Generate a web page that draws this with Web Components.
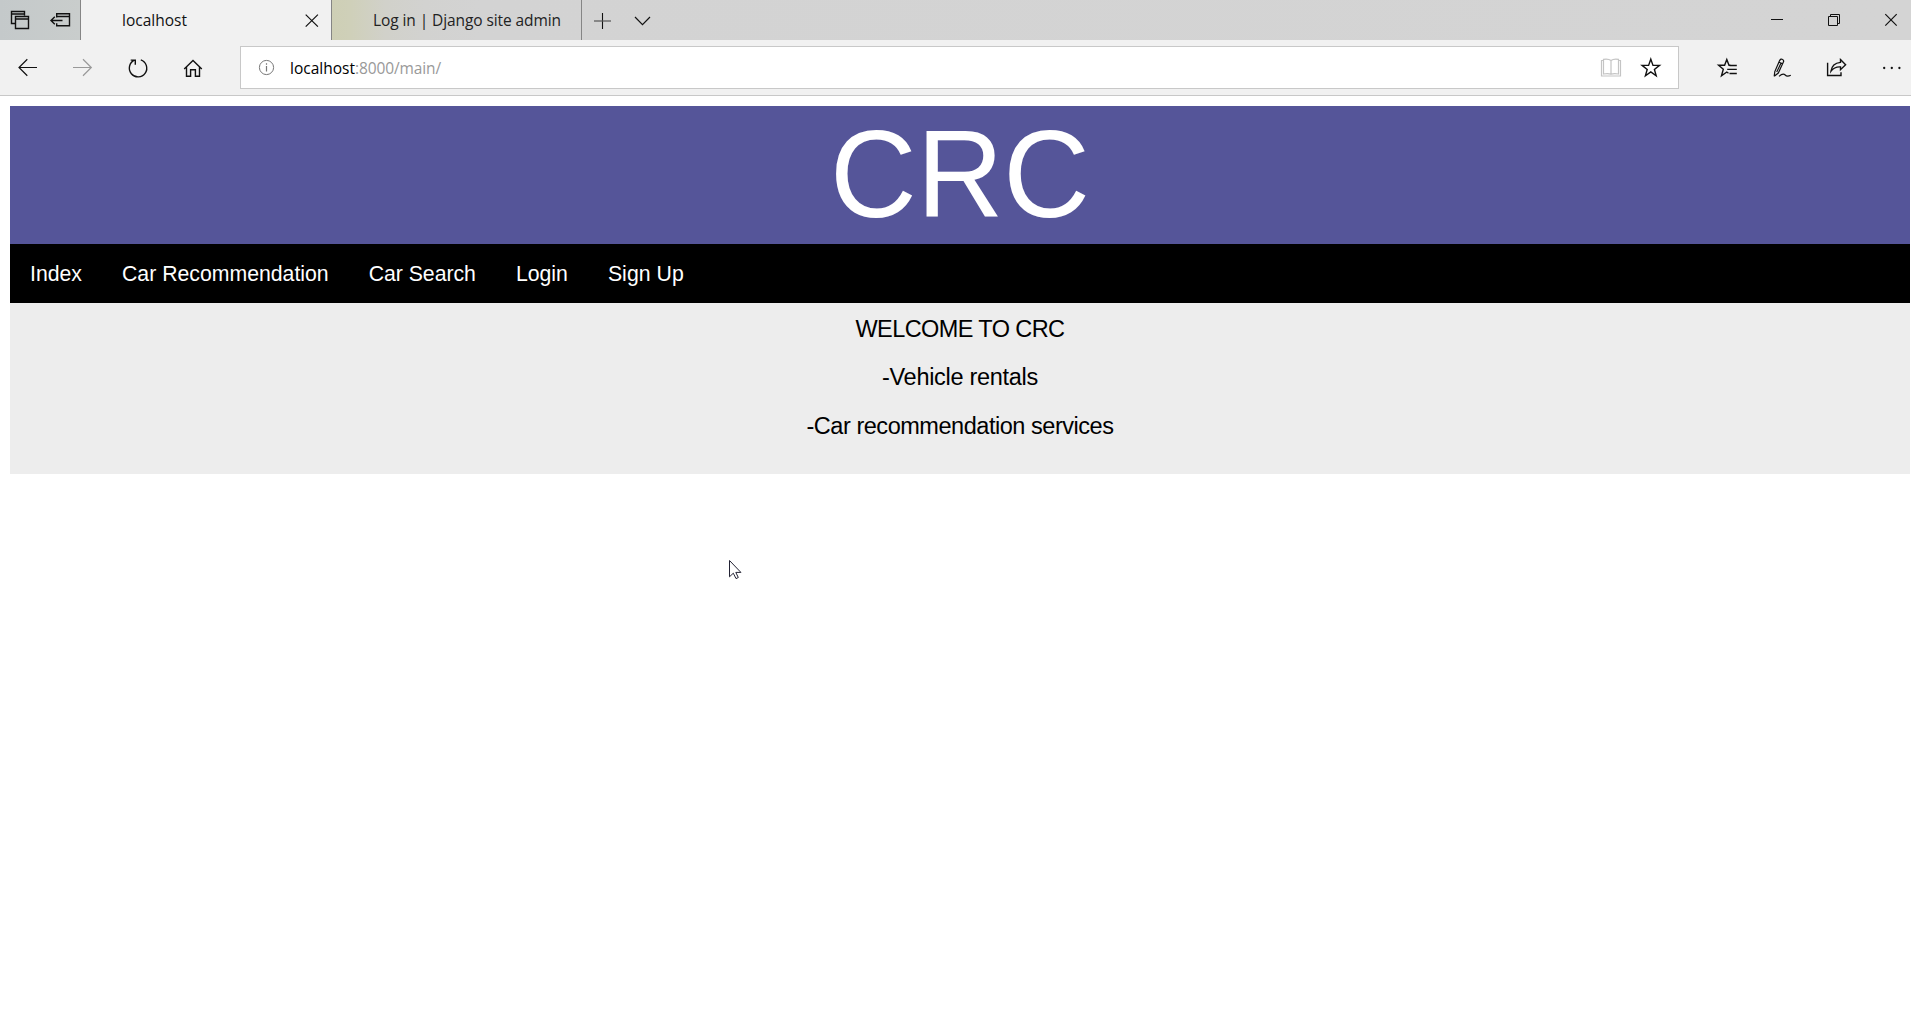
<!DOCTYPE html>
<html lang="en">
<head>
<meta charset="utf-8">
<title>localhost</title>
<style>
html,body{margin:0;height:100%;background:#fff;overflow:hidden}
body{font-family:"Open Sans","Noto Sans",sans-serif}
</style>
</head>
<body>
<browser-window></browser-window>
<script>
// Each icon: view box [x, y, w, h] and its drawing, in window units.
const ICONS = {
  tabs: [0,0,40,40,'<path d="M15 23.5H11.5V11.5H24.5V15.5M11.5 14H24.5M15.5 16.5H28.5V28.5H15.5ZM15.5 19H28.5" stroke-width="1.4"/>'],
  aside: [40,0,40,40,'<path d="M56.7 17.5V13.7H69.5V25.8H56.7V23.2M56.7 16.5H69.5M51 20.5H62.5M54.8 16.8L51 20.5L54.8 24.2" stroke-width="1.4"/>'],
  close: [292,0,40,40,'<path d="M305.7 14.6L317.9 26.6M317.9 14.6L305.7 26.6" stroke-width="1.2"/>'],
  plus: [582,0,40,40,'<path d="M602.5 13V29" stroke-width="1.1"/><path d="M594 21H611" stroke-width="1.2" stroke="#555"/>'],
  down: [622,0,40,40,'<path d="M635 17L642.5 24.6L650 17" stroke-width="1.2"/>'],
  min: [1748,0,58,40,'<path d="M1771 19.5H1783"/>'],
  max: [1806,0,56,40,'<path d="M1828.5 16.5H1837.5V25.5H1828.5ZM1830.5 16.5V14.5H1839.5V23.5H1837.5"/>'],
  quit: [1862,0,49,40,'<path d="M1885.3 14.2L1896.7 25.6M1896.7 14.2L1885.3 25.6" stroke-width="1.2"/>'],
  back: [0,41,55,54,'<path d="M19 67.5H37M27.3 59.3L19 67.5L27.3 75.7" stroke-width="1.2"/>'],
  forward: [55,41,55,54,'<path d="M73 67.5H91.3M83 59.3L91.3 67.5L83 75.7" stroke="#999" stroke-width="1.2"/>'],
  refresh: [110,41,55,54,'<path d="M140.8 59.9A8.7 8.7 0 1 1 134.5 60.2M130.7 60.1H135.3V64.7" stroke-width="1.4"/>'],
  home: [165,41,55,54,'<path d="M184.2 69L193 60.5L201.8 69M186.5 67V76.3H190.6V69.7H195.4V76.3H199.5V67" stroke-width="1.4"/>'],
  info: [251,47,31,41,'<g stroke="#777"><circle cx="266.5" cy="67.5" r="7.1"/><path d="M266.5 66V71.5M266.5 63.2V64.8" stroke-width="1.2"/></g>'],
  book: [1591,47,40,41,'<path d="M1611 60.5Q1608.5 58.5 1603.5 59.3V74Q1608.5 73.3 1611 74.3Q1613.5 73.3 1618.5 74V59.3Q1613.5 58.5 1611 60.5V74M1603.5 60.5H1601.5V76H1620.5V60.5H1618.5" stroke="#c4c4c4" stroke-width="1.2"/>'],
  star: [1631,47,40,41,'<path d="M1650.8 59.2L1653 65.4H1659.5L1654.4 69.4L1656.2 75.8L1650.8 71.9L1645.4 75.8L1647.2 69.4L1642.1 65.4H1648.6Z" stroke-width="1.4"/>'],
  hub: [1700,41,55,54,'<path d="M1730.5 65.3H1729L1726.8 59.4L1724.6 65.3H1718.6L1723.3 69.3L1721.5 75.8L1726.8 72L1728.5 73.2M1729.5 65.5H1736.8M1727.2 69.4H1736.8M1729.5 73.5H1736.8" stroke-width="1.4"/>'],
  pen: [1755,41,54,54,'<path d="M1774.2 76.3L1774.8 71.6L1779.6 60.6Q1781 58.3 1782.6 59.4Q1784.2 60.4 1783.4 62L1778.3 73L1774.2 76.3M1779 62.2L1782.7 63.8M1776.7 72L1781.2 62.8M1779 76.4Q1783 72.8 1785.2 75Q1787 77 1790.8 75.2" stroke-width="1.2"/>'],
  share: [1809,41,55,54,'<path d="M1827.6 62.8V75.5H1841V72.2M1840.5 59.6L1845.6 64.7L1840.5 69.7V66.9Q1834.5 66.5 1831 71.2Q1832 63.3 1840.5 62.4Z" stroke-width="1.4"/>'],
  more: [1864,41,47,54,'<g fill="#111" stroke="none"><circle cx="1884.2" cy="68" r="1.15"/><circle cx="1891.8" cy="68" r="1.15"/><circle cx="1899.4" cy="68" r="1.15"/></g>'],
  cursor: [726,556,18,26,'<path d="M729.5 560.5V576.8L733.3 573.2L736 578.6L738.3 577.5L735.8 572.4H740.9Z" fill="#fff" stroke="#223" stroke-width="1"/>']
};
function define(name, html, setup) {
  customElements.define(name, class extends HTMLElement {
    connectedCallback() {
      if (this.shadowRoot) return;
      const root = this.attachShadow({mode: 'open'});
      root.innerHTML = html;
      if (setup) setup(this, root);
    }
  });
}
define('line-icon', '<style>:host{display:block;flex:none}svg{display:block}</style>', (host, root) => {
  const [x, y, w, h, art] = ICONS[host.getAttribute('name')];
  root.innerHTML += `<svg width="${w}" height="${h}" viewBox="${x} ${y} ${w} ${h}" fill="none" stroke="#111" stroke-width="1">${art}</svg>`;
});
// Tracks its text so that it fills the given width.
define('fit-text', '<style>:host{display:inline-block;white-space:pre;flex:none}</style><slot></slot>', (host) => {
  const want = +host.getAttribute('width');
  const n = host.textContent.length;
  host.style.letterSpacing = ((want - host.getBoundingClientRect().width) / n) + 'px';
});
define('browser-tab', `<style>
:host{display:flex;align-items:center;box-sizing:border-box;height:40px;border-right:1px solid #858585;font-size:15.5px;line-height:20px;color:#222}
:host([active]){background:#f1f1f1;color:#111}
</style><slot></slot>`);
define('tab-strip', `<style>
:host{display:flex;height:40px;background:linear-gradient(90deg,#c4c9ca 0,#c9cdcc 80px,#c9cdcc 330px,#cecfb5 332px,#cfd0b9 350px,#d1d1ca 385px,#d2d2d0 425px,#d3d3d3 480px,#d4d4d4 100%)}
.set{display:flex;width:80px;border-right:1px solid #858585}
.one{width:251px}.two{width:250px}
.one fit-text{margin-left:41px}.two fit-text{margin-left:41px}
.one line-icon{margin-left:auto;margin-right:-1px}
.grow{flex:1}
</style>
<div class="set"><line-icon name="tabs"></line-icon><line-icon name="aside"></line-icon></div>
<browser-tab class="one" active><fit-text width="65">localhost</fit-text><line-icon name="close"></line-icon></browser-tab>
<browser-tab class="two"><fit-text width="188">Log in | Django site admin</fit-text></browser-tab>
<line-icon name="plus"></line-icon><line-icon name="down"></line-icon><div class="grow"></div>
<line-icon name="min"></line-icon><line-icon name="max"></line-icon><line-icon name="quit"></line-icon>`);
define('address-bar', `<style>
:host{display:flex;align-items:center;box-sizing:border-box;height:43px;flex:1;margin:0 21px 0 20px;padding:0 7px 0 10px;border:1px solid #c8c8c8;background:#fff;font-size:15.5px;line-height:20px}
.url{margin-left:8px;color:#000;white-space:nowrap;display:flex}.path{color:#999}.grow{flex:1}
</style><line-icon name="info"></line-icon>
<span class="url"><fit-text width="65">localhost</fit-text><fit-text class="path" width="86">:8000/main/</fit-text></span><span class="grow"></span>
<line-icon name="book"></line-icon><line-icon name="star"></line-icon>`);
define('tool-bar', `<style>
:host{display:flex;align-items:center;box-sizing:border-box;height:56px;border-bottom:1px solid #c8c8c8;background:#f1f1f1}
</style>
<line-icon name="back"></line-icon><line-icon name="forward"></line-icon><line-icon name="refresh"></line-icon><line-icon name="home"></line-icon>
<address-bar></address-bar>
<line-icon name="hub"></line-icon><line-icon name="pen"></line-icon><line-icon name="share"></line-icon><line-icon name="more"></line-icon>`);
define('site-header', `<style>
:host{display:block;height:138px;background:#555599;color:#fff;text-align:center;font-size:120px;line-height:138px}
span{display:block;transform:scaleY(1.041);transform-origin:50% 111px}
</style><span><slot></slot></span>`);
define('nav-link', `<style>
:host{display:block;padding:1px 20px 0;color:#fff;font-size:21.25px;line-height:58px}
</style><slot></slot>`);
define('site-nav', '<style>:host{display:flex;height:59px;background:#000}</style><slot></slot>');
define('site-intro', `<style>
:host{display:block;box-sizing:border-box;height:171px;padding-top:12.6px;background:#ededed;color:#000;text-align:center;font-size:23.5px;line-height:26px}
::slotted(p){margin:0 0 22.6px;height:26px}
</style><slot></slot>`);
define('site-page', `<style>
:host{display:block;padding:10px 1px 0 10px;font-family:"Liberation Sans",Arial,sans-serif}
nav-link fit-text{vertical-align:top}
</style>
<site-header>CRC</site-header>
<site-nav>
<nav-link><fit-text width="52">Index</fit-text></nav-link><nav-link><fit-text width="206.7">Car Recommendation</fit-text></nav-link><nav-link><fit-text width="107.2">Car Search</fit-text></nav-link><nav-link><fit-text width="52">Login</fit-text></nav-link><nav-link><fit-text width="76">Sign Up</fit-text></nav-link>
</site-nav>
<site-intro><p><fit-text width="209">WELCOME TO CRC</fit-text></p><p><fit-text width="156">-Vehicle rentals</fit-text></p><p><fit-text width="307">-Car recommendation services</fit-text></p></site-intro>`);
define('mouse-pointer', `<style>
:host{position:absolute;left:726px;top:556px}
</style><line-icon name="cursor"></line-icon>`);
define('browser-window', `<style>
:host{display:flex;flex-direction:column;height:100vh;background:#fff}
site-page{flex:1}
</style><tab-strip></tab-strip><tool-bar></tool-bar><site-page></site-page><mouse-pointer></mouse-pointer>`);
</script>
</body>
</html>
